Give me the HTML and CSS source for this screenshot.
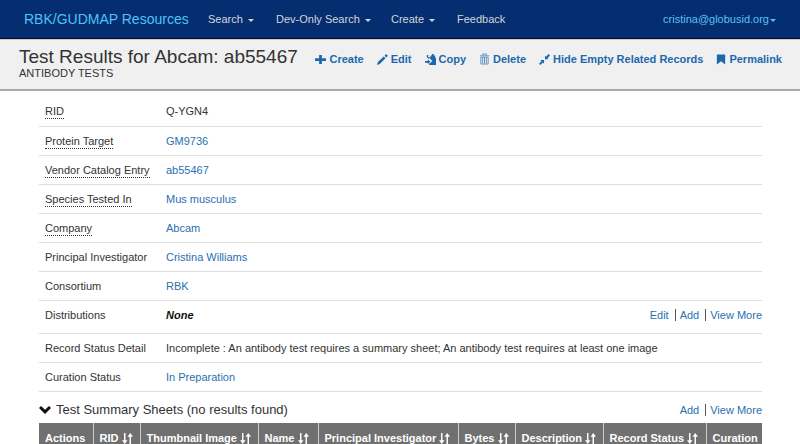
FILE: index.html
```html
<!DOCTYPE html>
<html lang="en">
<head>
<meta charset="utf-8">
<meta name="viewport" content="width=device-width, initial-scale=1">
<title>Test Results for Abcam: ab55467</title>
<link rel="stylesheet" href="styles.css">
</head>
<body>
<svg class="defs" aria-hidden="true">
  <symbol id="sort" viewBox="0 0 12 12"><path d="M3 0v9M9 12V2" fill="none" stroke="currentColor" stroke-width="1.6"/><path d="M0 8h6L3 12zM6 4h6L9 0z" fill="currentColor"/></symbol>
</svg>
<nav class="navbar">
  <a class="brand" href="#">RBK/GUDMAP Resources</a>
  <button class="menu menu-search" type="button">Search <span class="caret"></span></button>
  <button class="menu menu-dev" type="button">Dev-Only Search <span class="caret"></span></button>
  <button class="menu menu-create" type="button">Create <span class="caret"></span></button>
  <a class="menu" href="#">Feedback</a>
  <button class="menu user" type="button">cristina@globusid.org<span class="caret"></span></button>
</nav>
<header class="page-head">
  <div class="titles">
    <h1>Test Results for Abcam: ab55467</h1>
    <p>ANTIBODY TESTS</p>
  </div>
  <div class="actions">
    <button type="button"><svg viewBox="0 0 12 12"><path d="M4.500 1h3v3.500H12v3H7.500V11h-3V7.500H0v-3h4.500z"/></svg>Create</button>
    <button type="button"><svg viewBox="0 0 12 12"><path d="M0 12l1-3.300L7.300 2.700l2 2L3 11zM8.200 1.800L9.500.6q.6-.5 1.100 0l.8.8q.5.600 0 1.100L10.200 3.800z"/></svg>Edit</button>
    <button type="button"><svg viewBox="0 0 12 12"><path d="M2 1h1.500v2.500H6V1.500h1.500V0h2v1.500H11V4h1v8H4.500v-1.500L8 8 5.500 5H3.500L2 3.500z"/><path d="M0 7.500h3V6l3 2.500L3 11V9.500H0z"/></svg>Copy</button>
    <button type="button"><svg class="trash" viewBox="0 0 12 12"><path d="M1 2.500h10M4 2V.5h4V2M2 4h8v7.500H2zM4 4v7M6 4v7M8 4v7" fill="none" stroke="currentColor"/></svg>Delete</button>
    <button type="button"><svg viewBox="0 0 12 12"><path d="M6.500 1.800v4h4L9.200 4.500 12 1.700 10.300 0 7.700 2.900zM5.500 10.500v-4h-4l1.300 1.300L0 10.500 1.500 12l2.800-2.800z"/></svg>Hide Empty Related Records</button>
    <button type="button"><svg class="bookmark" viewBox="0 0 12 12"><path d="M1 0h10v12L6 8l-5 4z"/></svg>Permalink</button>
  </div>
</header>
<main>
  <table class="record">
    <tbody>
      <tr><th scope="row"><span class="hint">RID</span></th><td>Q-YGN4</td></tr>
      <tr><th scope="row"><span class="hint">Protein Target</span></th><td><a href="#">GM9736</a></td></tr>
      <tr><th scope="row"><span class="hint">Vendor Catalog Entry</span></th><td><a href="#">ab55467</a></td></tr>
      <tr><th scope="row"><span class="hint">Species Tested In</span></th><td><a href="#">Mus musculus</a></td></tr>
      <tr><th scope="row"><span class="hint">Company</span></th><td><a href="#">Abcam</a></td></tr>
      <tr><th scope="row">Principal Investigator</th><td><a href="#">Cristina Williams</a></td></tr>
      <tr><th scope="row">Consortium</th><td><a href="#">RBK</a></td></tr>
      <tr class="tall"><th scope="row">Distributions</th><td><div class="split"><strong>None</strong><span class="links"><a href="#">Edit</a><a href="#">Add</a><a href="#">View More</a></span></div></td></tr>
      <tr><th scope="row">Record Status Detail</th><td>Incomplete : An antibody test requires a summary sheet; An antibody test requires at least one image</td></tr>
      <tr><th scope="row">Curation Status</th><td><a href="#">In Preparation</a></td></tr>
    </tbody>
  </table>
  <section>
    <div class="section-head">
      <svg class="chevron" viewBox="0 0 12 8"><path d="M0 2l2-2 4 3.800L10 0l2 2-6 6z"/></svg>
      <h2>Test Summary Sheets (no results found)</h2>
      <span class="links"><a href="#">Add</a><a href="#">View More</a></span>
    </div>
    <table class="results">
      <colgroup><col class="c-actions"><col class="c-rid"><col class="c-thumb"><col class="c-name"><col class="c-pi"><col class="c-bytes"><col class="c-desc"><col class="c-status"><col></colgroup>
      <thead><tr>
        <th>Actions</th>
        <th>RID <svg><use href="#sort"/></svg></th>
        <th>Thumbnail Image <svg><use href="#sort"/></svg></th>
        <th>Name <svg><use href="#sort"/></svg></th>
        <th>Principal Investigator <svg><use href="#sort"/></svg></th>
        <th>Bytes <svg><use href="#sort"/></svg></th>
        <th>Description <svg><use href="#sort"/></svg></th>
        <th>Record Status <svg><use href="#sort"/></svg></th>
        <th>Curation</th>
      </tr></thead>
    </table>
  </section>
</main>
</body>
</html>
```

FILE: styles.css
```css
* { box-sizing: border-box; }
html { overflow: hidden; }
body {
  margin: 0;
  background: #fff;
  color: #333;
  font: 11px/16px "Liberation Sans", Arial, sans-serif;
}
a { color: #2a6fb0; text-decoration: none; }
button {
  padding: 0;
  border: 0;
  background: none;
  font: inherit;
  white-space: nowrap;
  cursor: pointer;
}
svg { fill: currentColor; }
.defs { display: none; }

.navbar {
  display: flex;
  align-items: center;
  height: 39px;
  padding: 0 24px;
  background: #042e70;
  border-bottom: 1px solid #080d1c;
}
.brand {
  width: 184px;
  color: #4fc3f7;
  font-size: 14px;
  white-space: nowrap;
}
.menu { color: #d5d5d5; text-align: left; }
.menu-search { width: 68px; }
.menu-dev { width: 115px; }
.menu-create { width: 66px; }
.user { margin-left: auto; color: #5bc0f5; }
.caret {
  display: inline-block;
  margin-left: 2px;
  border: 3px solid transparent;
  border-top-color: currentColor;
  border-bottom: 0;
  vertical-align: middle;
}
.user .caret { margin-left: 1px; }

.page-head {
  display: flex;
  justify-content: space-between;
  height: 52px;
  padding: 8px 18px 0 19px;
  background: #f0f0f0;
  border-top: 1px solid #ccc;
  border-bottom: 2px solid #aaa;
}
h1 {
  margin: 0;
  font-size: 19px;
  font-weight: 400;
  line-height: 18px;
  white-space: nowrap;
}
.titles p { margin: 0; line-height: 14px; }
.actions {
  display: flex;
  align-items: center;
  gap: 13px;
  height: 22px;
  color: #1c68ae;
}
.actions button {
  display: flex;
  align-items: center;
  gap: 3px;
  color: inherit;
  font-weight: 700;
}
.actions svg { width: 11px; height: 11px; }
.actions .trash { height: 12px; opacity: 0.7; }
.actions .bookmark { width: 10px; }

main { padding: 6px 38px 0 39px; }
table { width: 100%; border-collapse: collapse; }
.record th, .record td {
  height: 29px;
  padding: 0 0 0 6px;
  border-bottom: 1px solid #ddd;
  font-weight: 400;
  text-align: left;
}
.record th { width: 121px; white-space: nowrap; }
.record .tall td, .record .tall th { height: 33px; padding-bottom: 4px; }
.hint { display: inline-block; line-height: 13px; border-bottom: 1px dotted #333; }
.split { display: flex; justify-content: space-between; }
.split strong { color: #111; font-style: italic; }
.links a + a { margin-left: 6px; padding-left: 4px; border-left: 1px solid #555; }

.section-head {
  display: flex;
  align-items: center;
  gap: 5px;
  height: 31px;
  padding-top: 5px;
}
.chevron { width: 12px; height: 8px; color: #111; }
h2 { margin: 0; font-size: 13px; font-weight: 400; }
.section-head .links { margin-left: auto; }
.results { table-layout: fixed; }
.results th {
  height: 30px;
  padding: 0 0 0 6px;
  background: #707070;
  border-right: 1px solid #ccc;
  color: #fff;
  text-align: left;
  white-space: nowrap;
}
.results th:last-child { border-right: 0; }
.results svg { width: 11px; height: 11px; vertical-align: -2px; }
.c-actions { width: 54px; }
.c-rid { width: 47px; }
.c-thumb { width: 118px; }
.c-name { width: 60px; }
.c-pi { width: 140px; }
.c-bytes { width: 57px; }
.c-desc { width: 88px; }
.c-status { width: 103px; }
```
